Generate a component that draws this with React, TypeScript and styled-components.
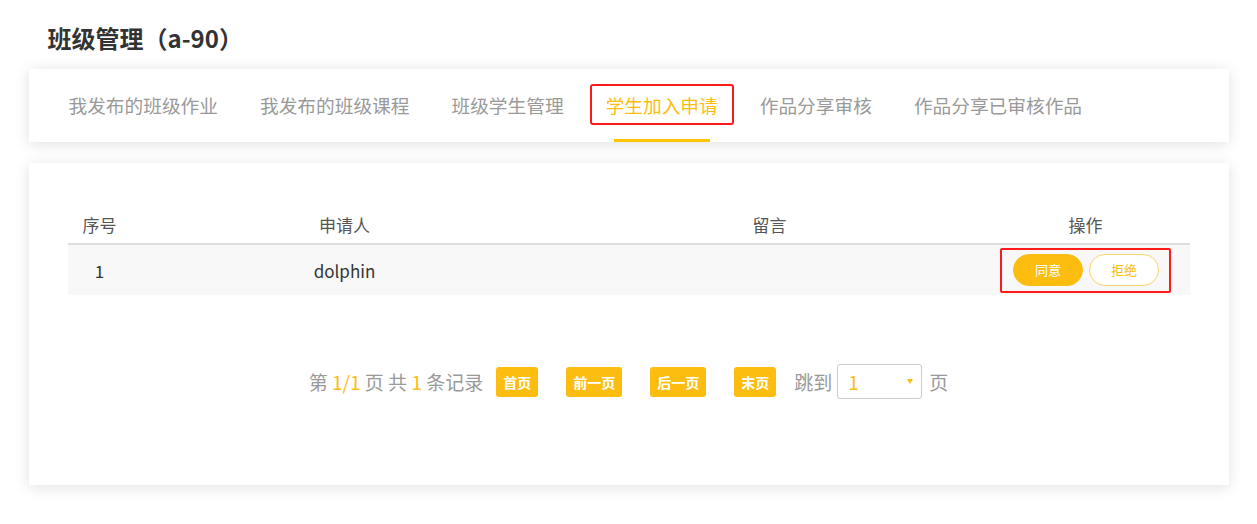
import styled, { createGlobalStyle } from "styled-components";

const Colors = {
   yellow: "#fcbd10",
   tabLine: "#ffc600",
   lightYellow: "#fbd36b",
   text: "#333333",
   head: "#555555",
   grey: "#999999",
   rowBg: "#f8f8f8",
   border: "#dddddd",
   mark: "#ff1a1a",
};

const GlobalStyle = createGlobalStyle`
   body {
      margin: 0;
      background: #ffffff;
      font-family: "Noto Sans CJK SC", "Noto Sans", sans-serif;
      color: ${Colors.text};
   }
`;

const Page = styled.div`
   width: 1200px;
   margin: 0 auto;
   padding: 20px 0 39px;
`;

const PageTitle = styled.h1`
   margin: 0 0 13px 19px;
   font-size: 24px;
   line-height: 36px;
   font-weight: 700;
   color: #333;
`;

const Card = styled.div`
   background: #fff;
   box-shadow: 0 2px 14px rgba(0, 0, 0, 0.12);
`;

const TabCard = styled(Card)`
   display: flex;
   align-items: stretch;
   height: 73px;
   padding-left: 19px;
   margin-bottom: 21px;
`;

const Tab = styled.div<{ $active?: boolean; $marked?: boolean }>`
   position: relative;
   display: flex;
   align-items: center;
   padding: 0 21px 3px;
   font-size: 18.7px;
   color: ${(p) => (p.$active ? Colors.yellow : Colors.grey)};
   white-space: nowrap;
   &::after {
      content: "";
      display: ${(p) => (p.$active ? "block" : "none")};
      position: absolute;
      left: 29px;
      right: 29px;
      bottom: 0;
      height: 3px;
      background: ${Colors.tabLine};
   }
   &::before {
      content: "";
      display: ${(p) => (p.$marked ? "block" : "none")};
      position: absolute;
      left: 5px;
      right: 5px;
      top: 15px;
      bottom: 17px;
      border: 2px solid ${Colors.mark};
      border-radius: 3px;
   }
`;

const ContentCard = styled(Card)`
   padding: 42px 39px 0;
   height: 280px;
`;

const Table = styled.div`
   width: 100%;
`;

const Row = styled.div<{ $head?: boolean }>`
   display: grid;
   grid-template-columns: 64px 426px 424px 1fr;
   align-items: center;
   height: ${(p) => (p.$head ? "38px" : "50px")};
   background: ${(p) => (p.$head ? "#fff" : Colors.rowBg)};
   border-bottom: ${(p) => (p.$head ? `2px solid ${Colors.border}` : "none")};
   font-size: 17px;
   color: ${(p) => (p.$head ? Colors.head : Colors.text)};
`;

const Cell = styled.div`
   display: flex;
   justify-content: center;
   align-items: center;
`;

const Marked = styled.div`
   display: flex;
   gap: 6px;
   padding: 4px 10px 5px 11px;
   border: 2px solid ${Colors.mark};
   border-radius: 2px;
`;

const PillButton = styled.button<{ $filled?: boolean }>`
   width: 70px;
   height: 32px;
   border-radius: 16px;
   border: 1px solid ${(p) => (p.$filled ? Colors.yellow : Colors.lightYellow)};
   background: ${(p) => (p.$filled ? Colors.yellow : "#fff")};
   color: ${(p) => (p.$filled ? "#fff" : Colors.yellow)};
   font-family: inherit;
   font-size: 13px;
   padding: 0;
   cursor: pointer;
`;

const Pager = styled.div`
   display: flex;
   justify-content: center;
   align-items: center;
   margin-top: 69px;
   font-size: 19px;
   color: ${Colors.grey};
`;

const Num = styled.span`
   color: ${Colors.yellow};
`;

const PageButton = styled.button`
   height: 30px;
   padding: 0 7px;
   margin: 0 14px;
   border: none;
   border-radius: 3px;
   background: ${Colors.yellow};
   color: #fff;
   font-family: inherit;
   font-size: 14px;
   font-weight: 700;
   cursor: pointer;
   &:first-of-type {
      margin-left: 13px;
   }
   &:last-of-type {
      margin-right: 18px;
   }
`;

const Select = styled.div`
   display: flex;
   align-items: center;
   justify-content: space-between;
   box-sizing: border-box;
   width: 85px;
   height: 35px;
   margin: 0 7px 0 5px;
   padding: 0 8px 0 10px;
   border: 1px solid #cccccc;
   border-radius: 3px;
   color: ${Colors.yellow};
   font-size: 19px;
`;

const Arrow = styled.span`
   width: 0;
   height: 0;
   border-left: 3px solid transparent;
   border-right: 3px solid transparent;
   border-top: 5px solid ${Colors.yellow};
`;

const tabs = ["我发布的班级作业", "我发布的班级课程", "班级学生管理", "学生加入申请", "作品分享审核", "作品分享已审核作品"];

export default function App() {
   return (
      <>
         <GlobalStyle />
         <Page>
            <PageTitle>班级管理（a-90）</PageTitle>
            <TabCard>
               {tabs.map((t, i) => (
                  <Tab key={i} $active={i === 3} $marked={i === 3}>{t}</Tab>
               ))}
            </TabCard>
            <ContentCard>
               <Table>
                  <Row $head>
                     <Cell>序号</Cell>
                     <Cell>申请人</Cell>
                     <Cell>留言</Cell>
                     <Cell>操作</Cell>
                  </Row>
                  <Row>
                     <Cell>1</Cell>
                     <Cell>dolphin</Cell>
                     <Cell></Cell>
                     <Cell>
                        <Marked>
                           <PillButton $filled>同意</PillButton>
                           <PillButton>拒绝</PillButton>
                        </Marked>
                     </Cell>
                  </Row>
               </Table>
               <Pager>
                  <span>第 <Num>1/1</Num> 页 共 <Num>1</Num> 条记录</span>
                  <PageButton>首页</PageButton>
                  <PageButton>前一页</PageButton>
                  <PageButton>后一页</PageButton>
                  <PageButton>末页</PageButton>
                  <span>跳到</span>
                  <Select>
                     <span>1</span>
                     <Arrow />
                  </Select>
                  <span>页</span>
               </Pager>
            </ContentCard>
         </Page>
      </>
   );
}
